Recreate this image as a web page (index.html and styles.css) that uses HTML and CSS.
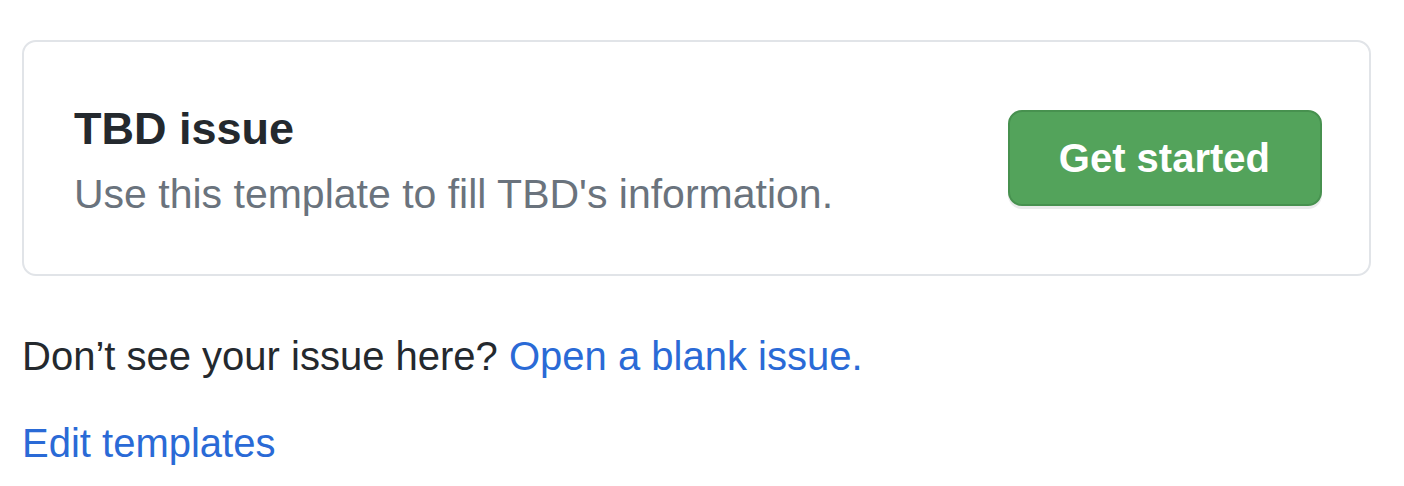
FILE: index.html
```html
<!DOCTYPE html>
<html lang="en">
<head>
<meta charset="utf-8">
<title>Issue templates</title>
<link rel="stylesheet" href="styles.css">
</head>
<body>
<main class="page">
  <section class="template-card">
    <div class="template-text">
      <h3 class="template-title">TBD issue</h3>
      <p class="template-desc">Use this template to fill TBD's information.</p>
    </div>
    <a class="btn-primary" href="#">Get started</a>
  </section>
  <p class="blank-line">Don’t see your issue here? <a class="link" href="#">Open a blank issue.</a></p>
  <p class="edit-line"><a class="link" href="#">Edit templates</a></p>
</main>
</body>
</html>
```

FILE: styles.css
```css
* { box-sizing: border-box; }
html, body { margin: 0; padding: 0; background: #ffffff; }
body {
  font-family: "Liberation Sans", Arial, Helvetica, sans-serif;
  color: #24292e;
}
.page {
  padding: 40px 33px 0 22px;
}
.template-card {
  display: flex;
  align-items: center;
  justify-content: space-between;
  border: 2px solid #e1e4e8;
  border-radius: 14px;
  padding: 50px 47px 50px 50px;
}
.template-text {
  margin-top: 9px;
}
.template-title {
  margin: 0;
  font-size: 45px;
  line-height: 56px;
  font-weight: 700;
  color: #24292e;
}
.template-desc {
  margin: 7px 0 0;
  font-size: 41px;
  line-height: 60px;
  color: #6a737d;
}
.btn-primary {
  display: inline-block;
  padding: 22px 50px 22px 49px;
  font-size: 40px;
  line-height: 48px;
  font-weight: 700;
  color: #ffffff;
  text-decoration: none;
  background: #53a35b;
  border: 2px solid #47914f;
  border-radius: 14px;
  box-shadow: 0 3px 0 rgba(27, 31, 35, 0.09);
  white-space: nowrap;
}
.blank-line {
  margin: 50px 0 0;
  font-size: 40px;
  line-height: 60px;
}
.edit-line {
  margin: 27px 0 0;
  font-size: 40px;
  line-height: 60px;
}
.link {
  color: #2a6ad6;
  text-decoration: none;
}
```
